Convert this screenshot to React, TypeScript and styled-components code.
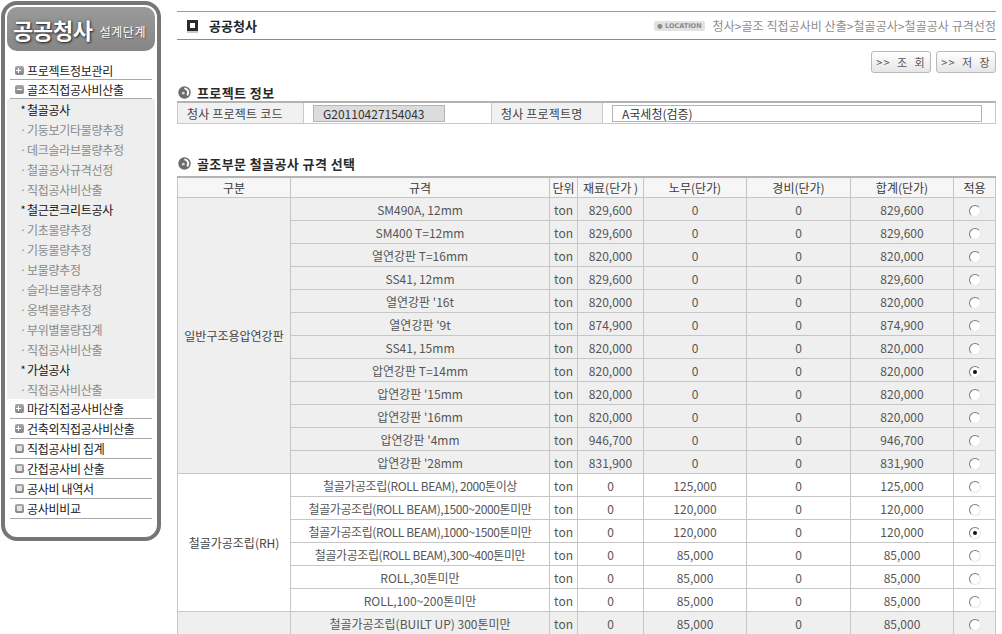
import React from 'react';
import styled, { createGlobalStyle } from 'styled-components';

const Global = createGlobalStyle`
  html, body { margin: 0; padding: 0; background: #fff; overflow: hidden; }
  body { font-family: "Noto Sans CJK KR", "Noto Sans", sans-serif; font-size: 12px; color: #333; }
`;

const Page = styled.div`
  display: flex;
  align-items: flex-start;
  width: 1002px;
  height: 634px;
  overflow: hidden;
`;

/* ---------- Sidebar ---------- */
const Sidebar = styled.aside`
  box-sizing: border-box;
  width: 160px;
  height: 540px;
  margin: 1px 0 0 1px;
  border: 4px solid #767676;
  border-radius: 16px;
  padding: 2px;
  background: #fff;
  display: flex;
  flex-direction: column;
  flex-shrink: 0;
`;

const Logo = styled.div`
  height: 44px;
  border-radius: 10px;
  background: linear-gradient(#9a9a9a, #868686);
  display: flex;
  align-items: center;
  padding-left: 6px;
  gap: 7px;
  color: #fff;
`;

const LogoMain = styled.span`
  font-size: 22px;
  font-weight: 700;
  letter-spacing: -0.3px;
  text-shadow: 1px 1px 2px #2a2a2a, 0 0 3px #555;
`;

const LogoSub = styled.span`
  font-size: 12px;
  margin-top: 5px;
  letter-spacing: 0.5px;
  text-shadow: 1px 1px 1px #555;
`;

const Menu = styled.nav`
  margin-top: 10px;
  display: flex;
  flex-direction: column;
`;

const MainItem = styled.div<{ $h?: number }>`
  box-sizing: border-box;
  height: ${p => p.$h ?? 20}px;
  margin: 0 3px;
  padding-left: 5px;
  border-bottom: 1px solid #a9a9a9;
  display: flex;
  align-items: center;
  gap: 3px;
  font-size: 12px;
  letter-spacing: -0.3px;
  color: #1a1a1a;
`;

const MenuIcon = styled.span<{ $kind: 'plus' | 'minus' | 'dot' }>`
  box-sizing: border-box;
  width: 9px;
  height: 9px;
  border-radius: 2px;
  background: linear-gradient(#a8a8a8, #858585);
  display: inline-flex;
  align-items: center;
  justify-content: center;
  flex-shrink: 0;
  &::after {
    content: '';
    display: block;
    background: ${p => (p.$kind === 'dot' ? '#e4e4e4' : '#fff')};
    width: 5px;
    height: ${p => (p.$kind === 'dot' ? '5px' : '1px')};
  }
  &::before {
    content: '';
    display: ${p => (p.$kind === 'plus' ? 'block' : 'none')};
    width: 1px;
    height: 5px;
    background: #fff;
    margin-right: -3px;
  }
`;

const SubGroup = styled.div`
  background: #eeeeee;
  display: flex;
  flex-direction: column;
`;

const SubItem = styled.div<{ $head?: boolean }>`
  height: 20px;
  display: flex;
  align-items: center;
  padding-left: 12px;
  font-size: 12px;
  letter-spacing: -0.3px;
  color: ${p => (p.$head ? '#111' : '#8a8a8a')};
`;

const Bullet = styled.span`
  display: inline-block;
  width: 8px;
  text-align: center;
  font-size: 11px;
`;

/* ---------- Main ---------- */
const Main = styled.main`
  margin-left: 16px;
  width: 819px;
  display: flex;
  flex-direction: column;
`;

const Header = styled.header`
  box-sizing: border-box;
  margin-top: 11px;
  height: 29px;
  border-top: 1px solid #9c9c9c;
  border-bottom: 1px solid #8a8a8a;
  display: flex;
  align-items: center;
  padding-left: 10px;
`;

const TitleIcon = styled.span`
  box-sizing: border-box;
  width: 11px;
  height: 11px;
  border: 3px solid #2a2a2a;
  background: #fff;
  box-shadow: 0 2px 0 #c8c8c8;
  margin-right: 11px;
`;

const Title = styled.h1`
  margin: 0;
  font-size: 13px;
  font-weight: 700;
  color: #222;
  flex: 1;
`;

const Location = styled.div`
  display: flex;
  align-items: center;
  gap: 8px;
  color: #8c8c8c;
  font-size: 12px;
  letter-spacing: 0.05px;
`;

const LocBadge = styled.span`
  background: #e2e2e2;
  border-radius: 2px;
  padding: 0 3px;
  height: 10px;
  line-height: 10px;
  font-size: 6.5px;
  font-weight: 700;
  color: #8a8a8a;
  letter-spacing: 0;
  font-family: "DejaVu Sans", sans-serif;
`;

const ButtonRow = styled.div`
  margin-top: 11px;
  display: flex;
  justify-content: flex-end;
  gap: 5px;
`;

const Button = styled.button`
  box-sizing: border-box;
  width: 60px;
  height: 22px;
  border: 1px solid #b9b9b9;
  border-radius: 3px;
  background: linear-gradient(#ffffff, #e6e6e6);
  color: #555;
  font-family: "Noto Sans CJK KR", sans-serif;
  font-size: 11px;
  padding: 0;
  letter-spacing: 1px;
  word-spacing: 3px;
`;

const SectionTitle = styled.h2<{ $top: number }>`
  margin: ${p => p.$top}px 0 0 1px;
  height: 16px;
  display: flex;
  align-items: center;
  gap: 6px;
  font-size: 13px;
  font-weight: 700;
  letter-spacing: 0.4px;
  color: #2a2a2a;
`;

const InfoTable = styled.table`
  margin-top: 1px;
  width: 818px;
  table-layout: fixed;
  border-collapse: collapse;
  border-top: 2px solid #b3b3b3;
  font-size: 12px;
`;

const InfoLabel = styled.td`
  height: 20px;
  padding: 0 0 0 9px;
  border: 1px solid #c9c9c9;
  background: #f1f1f1;
  color: #444;
  letter-spacing: 0.2px;
`;

const InfoValue = styled.td`
  height: 20px;
  padding: 0 0 0 9px;
  border: 1px solid #c9c9c9;
  background: #fff;
`;

const InfoInput = styled.div<{ $w: number; $disabled?: boolean }>`
  box-sizing: border-box;
  width: ${p => p.$w}px;
  height: 17px;
  border: 1px solid #b4b4b4;
  background: ${p => (p.$disabled ? '#dcdcdc' : '#fff')};
  color: #333;
  font-size: 12px;
  line-height: 15px;
  padding-left: 9px;
`;

const Grid = styled.table`
  margin-top: 5px;
  width: 818px;
  table-layout: fixed;
  border-collapse: collapse;
  border-top: 2px solid #b3b3b3;
  font-size: 12px;
  color: #555;
`;

const Th = styled.th`
  height: 19px;
  padding: 0;
  border: 1px solid #c6c6c6;
  background: #f6f6f6;
  font-weight: 400;
  color: #3a3a3a;
  text-align: center;
  white-space: nowrap;
`;

const Row = styled.tr<{ $shade?: boolean }>`
  background: ${p => (p.$shade ? '#efefef' : '#fff')};
`;

const Td = styled.td<{ $tight?: boolean }>`
  height: 22px;
  padding: 0;
  border: 1px solid #c6c6c6;
  text-align: center;
  white-space: nowrap;
  overflow: hidden;
  letter-spacing: ${p => (p.$tight ? '-0.4px' : '0')};
`;

const GroupTd = styled(Td)`
  color: #444;
`;

const Radio = styled.span<{ $on?: boolean }>`
  box-sizing: border-box;
  display: inline-flex;
  align-items: center;
  justify-content: center;
  width: 12px;
  height: 12px;
  border-radius: 50%;
  border: 1px solid;
  border-color: #7c7c7c #e8e8e8 #e8e8e8 #7c7c7c;
  background: #fff;
  vertical-align: middle;
  &::after {
    content: '';
    display: ${p => (p.$on ? 'block' : 'none')};
    width: 4px;
    height: 4px;
    border-radius: 50%;
    background: #111;
  }
`;

const SectionIcon = () => (
  <svg width="13" height="13" viewBox="0 0 13 13">
    <circle cx="6.5" cy="6.5" r="6.2" fill="#6c6c6c" />
    <path d="M7.2 2.6 A4 4 0 0 1 9.6 8.6" stroke="#fff" strokeWidth="2" fill="none" strokeLinecap="round" />
    <circle cx="5.3" cy="7.2" r="1.4" fill="#d8d8d8" />
  </svg>
);

type Item = { spec: string; mat: string; lab: string; total: string; on?: boolean; tight?: boolean };
type Group = { name: string; shade: boolean; items: Item[] };

const groups: Group[] = [
  {
    name: '일반구조용압연강판',
    shade: true,
    items: [
      { spec: 'SM490A, 12mm', mat: '829,600', lab: '0', total: '829,600' },
      { spec: 'SM400 T=12mm', mat: '829,600', lab: '0', total: '829,600' },
      { spec: '열연강판 T=16mm', mat: '820,000', lab: '0', total: '820,000' },
      { spec: 'SS41, 12mm', mat: '829,600', lab: '0', total: '829,600' },
      { spec: "열연강판 '16t", mat: '820,000', lab: '0', total: '820,000' },
      { spec: "열연강판 '9t", mat: '874,900', lab: '0', total: '874,900' },
      { spec: 'SS41, 15mm', mat: '820,000', lab: '0', total: '820,000' },
      { spec: '압연강판 T=14mm', mat: '820,000', lab: '0', total: '820,000', on: true },
      { spec: "압연강판 '15mm", mat: '820,000', lab: '0', total: '820,000' },
      { spec: "압연강판 '16mm", mat: '820,000', lab: '0', total: '820,000' },
      { spec: "압연강판 '4mm", mat: '946,700', lab: '0', total: '946,700' },
      { spec: "압연강판 '28mm", mat: '831,900', lab: '0', total: '831,900' },
    ],
  },
  {
    name: '철골가공조립(RH)',
    shade: false,
    items: [
      { spec: '철골가공조립(ROLL BEAM), 2000톤이상', mat: '0', lab: '125,000', total: '125,000', tight: true },
      { spec: '철골가공조립(ROLL BEAM),1500~2000톤미만', mat: '0', lab: '120,000', total: '120,000', tight: true },
      { spec: '철골가공조립(ROLL BEAM),1000~1500톤미만', mat: '0', lab: '120,000', total: '120,000', on: true, tight: true },
      { spec: '철골가공조립(ROLL BEAM),300~400톤미만', mat: '0', lab: '85,000', total: '85,000', tight: true },
      { spec: 'ROLL,30톤미만', mat: '0', lab: '85,000', total: '85,000' },
      { spec: 'ROLL,100~200톤미만', mat: '0', lab: '85,000', total: '85,000' },
    ],
  },
  {
    name: '철골가공조립(BH)',
    shade: true,
    items: [
      { spec: '철골가공조립(BUILT UP) 300톤미만', mat: '0', lab: '85,000', total: '85,000' },
      { spec: '철골가공조립(BUILT UP) 300~500톤미만', mat: '0', lab: '80,000', total: '80,000' },
      { spec: '철골가공조립(BUILT UP) 500톤이상', mat: '0', lab: '75,000', total: '75,000' },
    ],
  },
];

const subMenu: { text: string; head?: boolean }[] = [
  { text: '철골공사', head: true },
  { text: '기둥보기타물량추정' },
  { text: '데크슬라브물량추정' },
  { text: '철골공사규격선정' },
  { text: '직접공사비산출' },
  { text: '철근콘크리트공사', head: true },
  { text: '기초물량추정' },
  { text: '기둥물량추정' },
  { text: '보물량추정' },
  { text: '슬라브물량추정' },
  { text: '옹벽물량추정' },
  { text: '부위별물량집계' },
  { text: '직접공사비산출' },
  { text: '가설공사', head: true },
  { text: '직접공사비산출' },
];

const cols = [113, 259, 28, 66, 103, 104, 103, 42];

export default function App() {
  return (
    <>
      <Global />
      <Page>
        <Sidebar>
          <Logo>
            <LogoMain>공공청사</LogoMain>
            <LogoSub>설계단계</LogoSub>
          </Logo>
          <Menu>
            <MainItem $h={19}><MenuIcon $kind="plus" />프로젝트정보관리</MainItem>
            <MainItem $h={19}><MenuIcon $kind="minus" />골조직접공사비산출</MainItem>
            <SubGroup>
              {subMenu.map((s, i) => (
                <SubItem key={i} $head={s.head}>
                  <Bullet>{s.head ? '*' : '·'}</Bullet>
                  {s.text}
                </SubItem>
              ))}
            </SubGroup>
            <MainItem><MenuIcon $kind="plus" />마감직접공사비산출</MainItem>
            <MainItem><MenuIcon $kind="plus" />건축외직접공사비산출</MainItem>
            <MainItem><MenuIcon $kind="dot" />직접공사비 집계</MainItem>
            <MainItem><MenuIcon $kind="dot" />간접공사비 산출</MainItem>
            <MainItem><MenuIcon $kind="dot" />공사비 내역서</MainItem>
            <MainItem><MenuIcon $kind="dot" />공사비비교</MainItem>
          </Menu>
        </Sidebar>

        <Main>
          <Header>
            <TitleIcon />
            <Title>공공청사</Title>
            <Location>
              <LocBadge>● LOCATION</LocBadge>
              <span>청사&gt;골조 직접공사비 산출&gt;철골공사&gt;철골공사 규격선정</span>
            </Location>
          </Header>

          <ButtonRow>
            <Button>&gt;&gt; 조 회</Button>
            <Button>&gt;&gt; 저 장</Button>
          </ButtonRow>

          <SectionTitle $top={11}><SectionIcon />프로젝트 정보</SectionTitle>
          <InfoTable>
            <colgroup>
              <col style={{ width: 126 }} />
              <col style={{ width: 188 }} />
              <col style={{ width: 111 }} />
              <col style={{ width: 393 }} />
            </colgroup>
            <tbody>
              <tr>
                <InfoLabel>청사 프로젝트 코드</InfoLabel>
                <InfoValue><InfoInput $w={132} $disabled>G20110427154043</InfoInput></InfoValue>
                <InfoLabel>청사 프로젝트명</InfoLabel>
                <InfoValue><InfoInput $w={370}>A국세청(검증)</InfoInput></InfoValue>
              </tr>
            </tbody>
          </InfoTable>

          <SectionTitle $top={31}><SectionIcon />골조부문 철골공사 규격 선택</SectionTitle>
          <Grid>
            <colgroup>
              {cols.map((w, i) => <col key={i} style={{ width: w }} />)}
            </colgroup>
            <thead>
              <tr>
                <Th>구분</Th>
                <Th>규격</Th>
                <Th>단위</Th>
                <Th>재료(단가 )</Th>
                <Th>노무(단가)</Th>
                <Th>경비(단가)</Th>
                <Th>합계(단가)</Th>
                <Th>적용</Th>
              </tr>
            </thead>
            <tbody>
              {groups.map(g =>
                g.items.map((it, i) => (
                  <Row key={g.name + i} $shade={g.shade}>
                    {i === 0 && <GroupTd rowSpan={g.items.length}>{g.name}</GroupTd>}
                    <Td $tight={it.tight}>{it.spec}</Td>
                    <Td>ton</Td>
                    <Td>{it.mat}</Td>
                    <Td>{it.lab}</Td>
                    <Td>0</Td>
                    <Td>{it.total}</Td>
                    <Td><Radio $on={it.on} /></Td>
                  </Row>
                ))
              )}
            </tbody>
          </Grid>
        </Main>
      </Page>
    </>
  );
}
